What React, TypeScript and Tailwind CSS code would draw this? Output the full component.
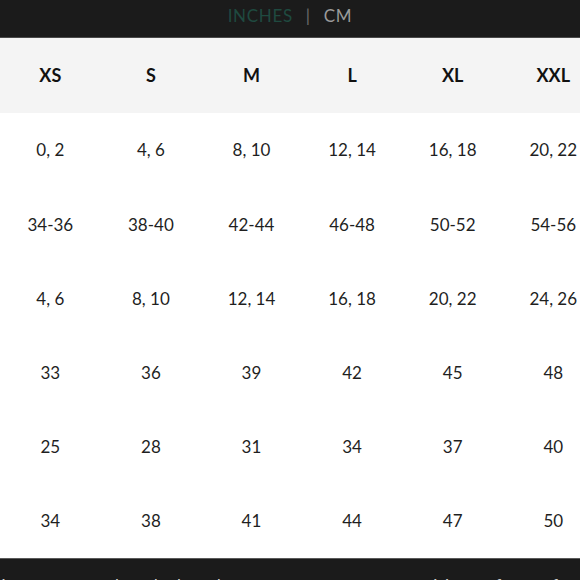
const sizes = ["XS", "S", "M", "L", "XL", "XXL"]

const rows = [
  ["0, 2", "4, 6", "8, 10", "12, 14", "16, 18", "20, 22"],
  ["34-36", "38-40", "42-44", "46-48", "50-52", "54-56"],
  ["4, 6", "8, 10", "12, 14", "16, 18", "20, 22", "24, 26"],
  ["33", "36", "39", "42", "45", "48"],
  ["25", "28", "31", "34", "37", "40"],
  ["34", "38", "41", "44", "47", "50"]
]

export default function App() {
  return (
    <div className="w-[580px] h-[580px] overflow-hidden bg-white font-['Lato','Open_Sans',sans-serif]">
      {/* unit switch */}
      <div className="h-[38px] bg-[#1b1b1b] border-b border-[#4a4a4a] flex items-center justify-center gap-[13px] pb-[6px] text-[17px] tracking-[0.04em]">
        <span className="text-[#1f4a40]">INCHES</span>
        <span className="text-[#6b6b6b]">|</span>
        <span className="text-[#9a9a9a]">CM</span>
      </div>

      <div className="grid grid-cols-[repeat(6,100.6px)]">
        {sizes.map((s) => (
          <div
            key={s}
            className="h-[75px] bg-[#f4f4f4] flex items-center justify-center text-[18px] font-bold text-[#111]">
            {s}
          </div>
        ))}
        {rows.map((row, i) =>
          row.map((v, j) => (
            <div
              key={`${i}-${j}`}
              className="h-[74.2px] flex items-center justify-center text-[17px] text-[#1f1f1f]">
              {v}
            </div>
          ))
        )}
      </div>

      <div className="h-[40px] bg-[#1b1b1b] border-t border-[#5a5a5a] pt-[15px] whitespace-nowrap text-[17px] leading-[24px] text-[#cfcfcf] -ml-[8px]">
        pieces not stretch, order based on exact measurements or sizing up for comfort.
      </div>
    </div>
  )
}
